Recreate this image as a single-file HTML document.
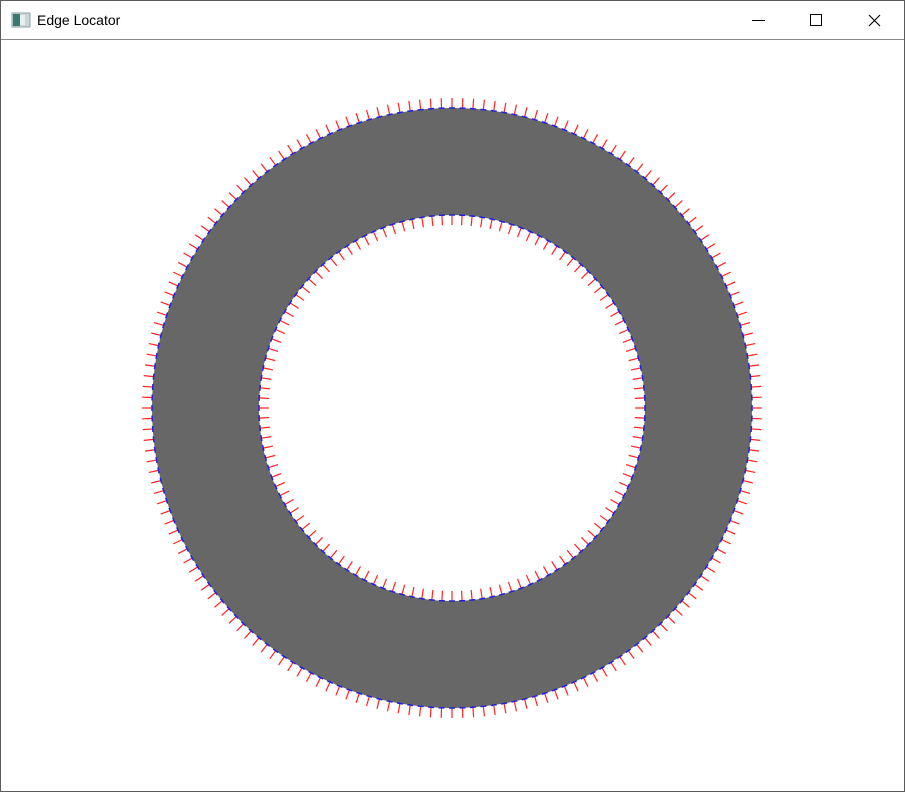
<!DOCTYPE html>
<html><head><meta charset="utf-8"><style>
html,body{margin:0;padding:0;background:#fff;}
body{width:905px;height:792px;position:relative;overflow:hidden;font-family:"Liberation Sans",sans-serif;}
.win{position:absolute;left:0;top:0;width:903px;height:790px;border:1px solid #5a5a5a;background:#fff;}
.title{position:absolute;left:0;top:0;width:903px;height:38px;background:#fff;border-bottom:1px solid #8a8a8a;}
.title .t{position:absolute;left:36px;top:11px;font-size:14px;color:#000;}
svg{position:absolute;left:0;top:0;}
</style></head><body>
<div class="win">
<div class="title">
<svg width="30" height="38"><rect x="11" y="12" width="18" height="14" fill="#ccd6d6" stroke="#8aa" stroke-width="1"/><rect x="12" y="13" width="7" height="12" fill="#3a7a6e"/><rect x="19" y="14" width="5" height="10" fill="#e8f0f0"/></svg>
<span class="t">Edge Locator</span>
<svg width="903" height="38"><line x1="751" y1="19.5" x2="764" y2="19.5" stroke="#000"/><rect x="809.5" y="13.5" width="11" height="11" fill="none" stroke="#000"/><path d="M868 14 L879 25 M879 14 L868 25" stroke="#000" stroke-width="1.1"/></svg>
</div>
</div>
<svg id="s" width="905" height="792">
<path d="M452 108 A300 300 0 1 0 452.01 108 Z M452 215 A193 193 0 1 1 451.99 215 Z" fill="#676767" fill-rule="evenodd"/>
<g id="g"></g>
</svg>
<script>
var g=document.getElementById('g'),cx=452,cy=408,h='';
function ring(r,n,dir){for(var i=0;i<n;i++){var a=i*2*Math.PI/n,c=Math.cos(a),s=Math.sin(a);
var x=cx+r*c,y=cy+r*s;
h+='<line x1="'+x+'" y1="'+y+'" x2="'+(x+dir*10*c)+'" y2="'+(y+dir*10*s)+'" stroke="#ff2020" stroke-width="1.2"/>';
h+='<line x1="'+(x-3*s)+'" y1="'+(y+3*c)+'" x2="'+(x+3*s)+'" y2="'+(y-3*c)+'" stroke="#2020e0" stroke-width="1.5"/>';}}
ring(300,180,1);ring(193,120,-1);
g.innerHTML=h;
</script>
</body></html>
